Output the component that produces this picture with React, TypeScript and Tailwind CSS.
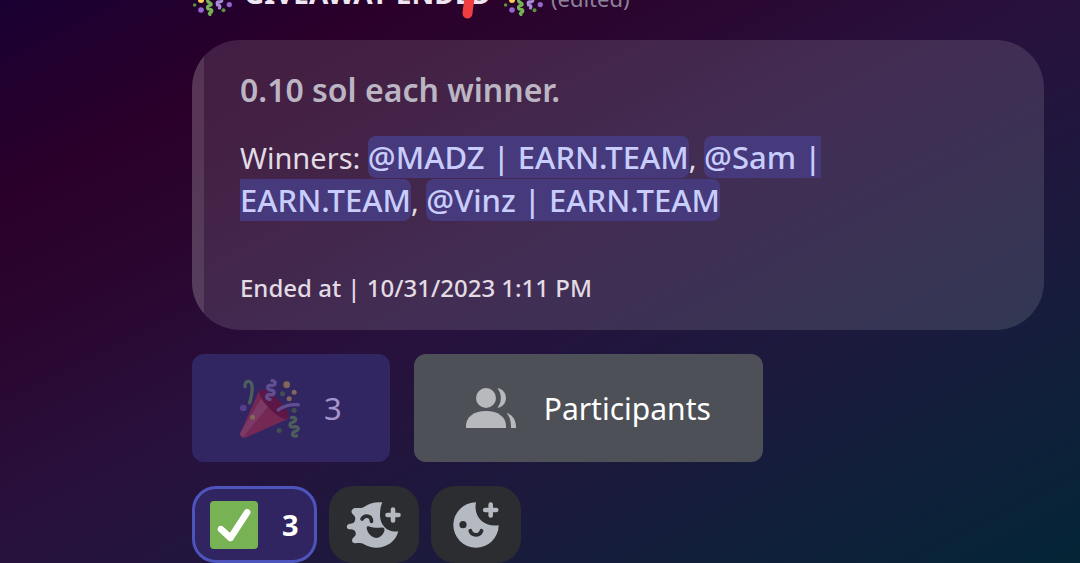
import React from "react";

function PartyPopper({ className }: { className?: string }) {
  return (
    <svg viewBox="0 0 36 36" className={className} aria-hidden="true">
      <path fill="#DD2E44" d="M11.626 7.488c-.112.112-.197.247-.268.395l-.008-.008L.134 33.141l.011.011c-.208.403.14 1.223.853 1.937.713.713 1.533 1.061 1.936.853l.01.01L28.21 24.735l-.008-.009c.147-.07.282-.155.395-.269 1.562-1.562-.971-6.627-5.656-11.313-4.687-4.686-9.752-7.218-11.315-5.656z" />
      <path fill="#EA596E" d="M13 12L.416 32.506l-.282.635.011.011c-.208.403.14 1.223.853 1.937.232.232.473.408.709.557L17 17l-4-5z" />
      <path fill="#A0041E" d="M23.012 13.066c4.67 4.672 7.263 9.652 5.789 11.124-1.473 1.474-6.453-1.118-11.126-5.788-4.671-4.672-7.263-9.654-5.79-11.127 1.474-1.473 6.454 1.119 11.127 5.791z" />
      <path fill="#AA8DD8" d="M18.59 13.609c-.199.161-.459.245-.734.215-.868-.094-1.598-.396-2.109-.873-.541-.505-.808-1.183-.735-1.862.128-1.192 1.324-2.286 3.363-2.066.793.085 1.147-.17 1.159-.292.014-.121-.277-.446-1.07-.532-.868-.094-1.598-.396-2.11-.873-.541-.505-.809-1.183-.735-1.862.13-1.192 1.325-2.286 3.362-2.065.578.062.883-.057 1.012-.134.103-.063.144-.123.148-.158.012-.121-.275-.446-1.07-.532-.549-.06-.947-.552-.886-1.102.059-.549.55-.946 1.101-.886 2.037.219 2.973 1.542 2.844 2.735-.13 1.194-1.325 2.286-3.364 2.067-.578-.063-.88.057-1.01.134-.103.062-.145.123-.149.157-.013.122.276.446 1.071.532 2.037.22 2.973 1.542 2.844 2.735-.129 1.192-1.324 2.286-3.362 2.065-.578-.062-.882.058-1.012.134-.104.064-.144.124-.148.158-.013.121.276.446 1.07.532.548.06.947.553.886 1.102-.028.274-.167.511-.366.671z" />
      <path fill="#77B255" d="M30.661 22.857c1.973-.557 3.334.323 3.658 1.478.324 1.154-.378 2.615-2.35 3.17-.77.216-1.001.584-.97.701.034.118.425.312 1.193.095 1.972-.555 3.333.325 3.657 1.479.326 1.155-.378 2.614-2.351 3.17-.769.216-1.001.585-.967.702.033.117.423.311 1.192.095.53-.149 1.084.16 1.233.691.148.532-.161 1.084-.693 1.234-1.971.555-3.333-.323-3.659-1.479-.324-1.154.379-2.613 2.353-3.169.77-.217 1.001-.584.967-.702-.032-.117-.422-.312-1.19-.096-1.974.556-3.334-.322-3.659-1.479-.325-1.154.378-2.613 2.351-3.17.768-.215.999-.585.967-.701-.034-.118-.423-.312-1.192-.096-.532.15-1.083-.16-1.233-.691-.149-.53.161-1.082.693-1.232z" />
      <path fill="#AA8DD8" d="M23.001 20.16c-.294 0-.584-.129-.782-.375-.345-.432-.274-1.061.156-1.406.218-.175 5.418-4.259 12.767-3.208.547.078.927.584.849 1.131-.078.546-.58.93-1.132.848-6.493-.922-11.187 2.754-11.233 2.791-.186.148-.406.219-.625.219z" />
      <path fill="#77B255" d="M5.754 16c-.095 0-.192-.014-.288-.042-.529-.159-.829-.716-.67-1.245 1.133-3.773 2.16-9.794.898-11.364-.141-.178-.354-.353-.842-.316-.938.072-.849 2.051-.848 2.071.042.551-.372 1.031-.922 1.072-.559.034-1.031-.372-1.072-.923-.103-1.379.326-4.035 2.692-4.214 1.056-.08 1.933.287 2.552 1.057 2.371 2.951-.036 11.506-.542 13.192-.13.433-.528.712-.958.712z" />
      <circle fill="#5C913B" cx="25.5" cy="9.5" r="1.5" />
      <circle fill="#9266CC" cx="2" cy="18" r="2" />
      <circle fill="#5C913B" cx="32.5" cy="19.5" r="1.5" />
      <circle fill="#5C913B" cx="23.5" cy="31.5" r="1.5" />
      <circle fill="#FFCC4D" cx="28" cy="4" r="2" />
      <circle fill="#FFCC4D" cx="32.5" cy="8.5" r="1.5" />
      <circle fill="#FFCC4D" cx="29.5" cy="12.5" r="1.5" />
      <circle fill="#FFCC4D" cx="7.5" cy="23.5" r="1.5" />
    </svg>
  );
}

function Confetti() {
  return (
    <svg viewBox="0 0 40 40" className="size-10 shrink-0" fill="none" aria-hidden="true">
      <path d="M6 2 Q20 -4 34 2 L30 16 H10 Z" fill="#DD2E44" />
      <circle cx="9" cy="24" r="3" fill="#FFCC4D" />
      <circle cx="2.6" cy="29" r="1.8" fill="#5C913B" />
      <circle cx="9" cy="34" r="2.8" fill="#9266CC" />
      <circle cx="31.5" cy="34.2" r="2" fill="#5C913B" />
      <circle cx="37.3" cy="28.6" r="2.6" fill="#9266CC" />
      <path d="M20 22 Q14 23 16 26 Q20 27 19 29 Q14 30 16 33 Q21 33 19.5 36 Q16 37 18 38.6" stroke="#77B255" strokeWidth="3" strokeLinecap="round" />
      <path d="M29 22 Q31 26 28 26 Q24 25 25.5 29 Q29 29 27.5 32" stroke="#AA8DD8" strokeWidth="3" strokeLinecap="round" />
    </svg>
  );
}

function People() {
  return (
    <svg viewBox="0 0 50 40" className="h-10 w-[50px] fill-[#b8b9bc]" aria-hidden="true">
      <circle cx="20" cy="10" r="10" />
      <path d="M0 40V38C0 29 8 23 20 23S40 29 40 38V40Z" />
      <path d="M31.5 .2C36.5 .6 40 5 40 10S36.5 19.4 31.5 19.8C36 14 36 6 31.5 .2Z" />
      <path d="M40.5 24.8C47 27 50.2 32 50 40H45C45 33.5 44 29 40.5 24.8Z" />
    </svg>
  );
}

function CheckMark() {
  return (
    <svg viewBox="0 0 36 36" className="size-12" aria-hidden="true">
      <rect width="36" height="36" rx="3" fill="#77B255" />
      <path fill="#fff" d="M29.28 6.362c-1.156-.751-2.704-.422-3.458.736L14.936 23.877l-5.029-4.65c-1.014-.938-2.596-.875-3.533.138-.937 1.014-.875 2.596.139 3.533l7.209 6.666c.48.445 1.09.665 1.696.665.673 0 1.534-.282 2.099-1.139.332-.506 12.5-19.27 12.5-19.27.751-1.159.421-2.707-.737-3.458z" />
    </svg>
  );
}

function SuperReactionIcon() {
  return (
    <svg viewBox="0 0 56 48" className="h-12 w-14" fill="none" aria-hidden="true">
      <path
        fill="#b5b9c1"
        d="M36.3 1.4C29 .6 23 2.5 18 6C15 8 12 6.5 9 7C5 8 4.5 11.5 7 13.5C9.5 15.5 9.8 18 8.5 20.5C7.5 22.8 5.5 22.3 3 23C0 24 .2 27.5 3 28.2C6 28.6 8.5 28.3 9.5 31C10.3 33.5 9.5 34.5 7.5 36.5C4.8 39 6 42.3 9.5 42.2C12.5 42.2 14.5 41.5 18 43.3C22 45.5 26 46.7 30 46.7C41 46.7 50 40 52.3 30.2C42 32 34.5 25 34 15C33.9 10 34.5 5 36.3 1.4Z"
      />
      <path d="M16 18C19 13.5 25.5 14.5 25.5 20.5" stroke="#2b2d31" strokeWidth="3.6" strokeLinecap="round" />
      <path d="M22.5 25.3C27 26.8 31 27 35.5 26.6C38.3 26.4 39.2 28.4 38 31C36 35.5 32 38 28 36.5C24 35 21.5 31.5 20.8 28C20.4 26 21 24.9 22.5 25.3Z" fill="#2b2d31" />
      <path d="M47 8.5V19.5M41.5 14H52.5" stroke="#b5b9c1" strokeWidth="4.6" strokeLinecap="round" />
    </svg>
  );
}

function AddReactionIcon() {
  return (
    <svg viewBox="0 0 48 48" className="size-12" fill="none" aria-hidden="true">
      <path fill="#b5b9c1" d="M24 1.3A22.7 22.7 0 1 0 46.7 24.2C33 26.5 21 17 24 1.3Z" />
      <circle cx="11" cy="23.7" r="3.6" fill="#2b2d31" />
      <path d="M18.3 29.8C20 35.3 27.5 35.3 29.5 29.8" stroke="#2b2d31" strokeWidth="3.8" strokeLinecap="round" />
      <path d="M38.7 3.5V14.5M33.2 9H44.2" stroke="#b5b9c1" strokeWidth="4.6" strokeLinecap="round" />
    </svg>
  );
}

function Mention({ children }: { children: React.ReactNode }) {
  return (
    <a href="#" className="rounded-lg bg-[#463a7d] text-[31px] font-medium text-[#c9cdfb]">
      {children}
    </a>
  );
}

export default function App() {
  return (
    <main className="min-h-screen overflow-hidden bg-[linear-gradient(153deg,#1a0033_0%,#2a0029_18%,#2a062f_30%,#28113d_48%,#1b1a3d_70%,#10203a_84%,#042536_100%)] pr-9 pl-48 font-['Noto_Sans','Open_Sans',sans-serif]">
      <header className="relative -mt-6 flex h-10 items-center gap-2">
        <Confetti />
        <h1 className="mx-1 pb-1.5 text-[28px] font-bold whitespace-nowrap text-[#eee6f2]">GIVEAWAY ENDED</h1>
        <Confetti />
        <span className="pt-1 text-[22px] text-[#8d829b]">(edited)</span>
        <svg viewBox="0 0 20 48" className="absolute -top-1 left-[267px] h-12 w-5" fill="none" aria-hidden="true">
          <path d="M15 4C13 16 9.5 28 8.5 41.5" stroke="#f03d40" strokeWidth="10" strokeLinecap="round" />
        </svg>
      </header>

      <article className="mt-6 flex overflow-hidden rounded-[48px] bg-white/12">
        <div className="w-3 shrink-0 bg-white/10" />
        <div className="pt-7 pr-24 pb-[26px] pl-9">
          <h2 className="text-[32px] leading-[44px] font-semibold text-[#bcb5c3]">0.10 sol each winner.</h2>
          <p className="mt-6 text-[29px] leading-[43px] text-[#e2dbe4]">
            Winners: <Mention>@MADZ | EARN.TEAM</Mention>, <Mention>@Sam | EARN.TEAM</Mention>,{" "}
            <Mention>@Vinz | EARN.TEAM</Mention>
          </p>
          <footer className="mt-[50px] text-[24px] leading-8 font-medium text-[#e2dbe4]">
            Ended at | 10/31/2023 1:11 PM
          </footer>
        </div>
      </article>

      <div className="mt-6 flex gap-6">
        <button type="button" disabled className="flex h-[108px] items-center gap-6 rounded-xl bg-[#312562] px-12 text-[31px] text-[#a595cb]">
          <PartyPopper className="size-[60px] opacity-40" />
          3
        </button>
        <button type="button" className="flex h-[108px] items-center gap-7 rounded-xl bg-[#4e5058] px-[52px] text-[30px] text-white">
          <People />
          Participants
        </button>
      </div>

      <div className="mt-6 flex gap-3">
        <button type="button" aria-pressed="true" className="flex h-[77px] items-center gap-6 rounded-3xl border-3 border-[#4d55bd] bg-[#302461] px-[15px] text-[29px] font-bold text-white">
          <CheckMark />
          3
        </button>
        <button type="button" aria-label="Add super reaction" className="flex h-[77px] w-[90px] items-center justify-center rounded-3xl bg-[#2b2d31]">
          <SuperReactionIcon />
        </button>
        <button type="button" aria-label="Add reaction" className="flex h-[77px] w-[90px] items-center justify-center rounded-3xl bg-[#2b2d31]">
          <AddReactionIcon />
        </button>
      </div>
    </main>
  );
}
